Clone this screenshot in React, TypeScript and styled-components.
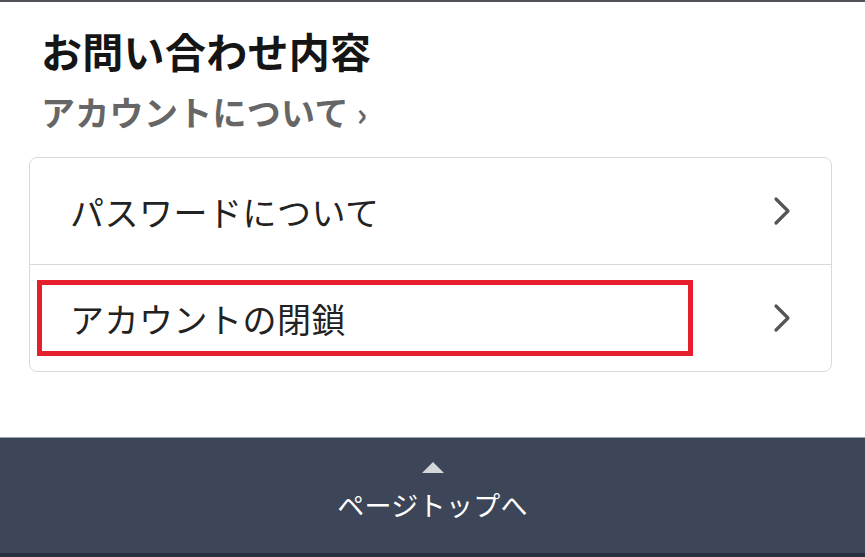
import React from 'react';
import styled, { createGlobalStyle } from 'styled-components';

const GlobalStyle = createGlobalStyle`
  html, body {
    margin: 0;
    padding: 0;
    background: #ffffff;
    font-family: "Noto Sans CJK JP", "Noto Sans", sans-serif;
  }
`;

const Page = styled.div`
  display: flex;
  flex-direction: column;
  height: 557px;
  border-top: 2px solid #4f5257;
  box-sizing: border-box;
  overflow: hidden;
`;

const Content = styled.main`
  flex: 1;
  padding: 20px 33px 0 29px;
`;

const Heading = styled.h1`
  margin: 0 0 0 12px;
  font-size: 41px;
  line-height: 56px;
  font-weight: 700;
  color: #151515;
  letter-spacing: 0.3px;
`;

const Category = styled.div`
  margin: 11px 0 0 12px;
  font-size: 34px;
  line-height: 46px;
  font-weight: 700;
  color: #666666;
  letter-spacing: 0.3px;
  display: flex;
  align-items: center;
  gap: 8px;
`;

const CategoryArrow = styled.span`
  font-size: 32px;
  font-weight: 700;
`;

const Card = styled.ul`
  list-style: none;
  margin: 22px 0 0;
  padding: 0;
  border: 1.5px solid #d9d9d9;
  border-radius: 8px;
  background: #fff;
`;

const Row = styled.li<{ $divider?: boolean }>`
  height: 106px;
  display: flex;
  align-items: center;
  justify-content: space-between;
  padding: 0 38px 0 7px;
  border-top: ${(p) => (p.$divider ? '1.5px solid #d9d9d9' : 'none')};
`;

const Label = styled.span<{ $marked?: boolean }>`
  display: flex;
  align-items: center;
  width: 656px;
  height: 76px;
  box-sizing: border-box;
  padding-left: ${(p) => (p.$marked ? '28px' : '33px')};
  border: ${(p) => (p.$marked ? '5px solid #e51f2b' : 'none')};
  font-size: 34px;
  color: #222222;
  letter-spacing: 0.5px;
`;

const Chevron = () => (
  <svg width="22" height="32" viewBox="0 0 22 32">
    <path d="M5 4 L17 16 L5 28" fill="none" stroke="#555" strokeWidth="3.2" strokeLinecap="round" strokeLinejoin="round" />
  </svg>
);

const Footer = styled.footer`
  height: 120px;
  background: #3d4658;
  border-top: 1px solid #9aa3b3;
  border-bottom: 4px solid #283040;
  box-sizing: border-box;
  display: flex;
  flex-direction: column;
  align-items: center;
  padding-top: 24px;
`;

const UpArrow = styled.div`
  width: 0;
  height: 0;
  border-left: 11px solid transparent;
  border-right: 11px solid transparent;
  border-bottom: 11px solid #d4d6da;
`;

const TopLink = styled.a`
  margin-top: 14px;
  font-size: 27px;
  line-height: 36px;
  color: #ffffff;
  text-decoration: none;
  letter-spacing: 0.3px;
`;

export default function App() {
  return (
    <>
      <GlobalStyle />
      <Page>
        <Content>
          <Heading>お問い合わせ内容</Heading>
          <Category>
            アカウントについて<CategoryArrow>›</CategoryArrow>
          </Category>
          <Card>
            <Row>
              <Label>パスワードについて</Label>
              <Chevron />
            </Row>
            <Row $divider>
              <Label $marked>アカウントの閉鎖</Label>
              <Chevron />
            </Row>
          </Card>
        </Content>
        <Footer>
          <UpArrow />
          <TopLink href="#">ページトップへ</TopLink>
        </Footer>
      </Page>
    </>
  );
}
